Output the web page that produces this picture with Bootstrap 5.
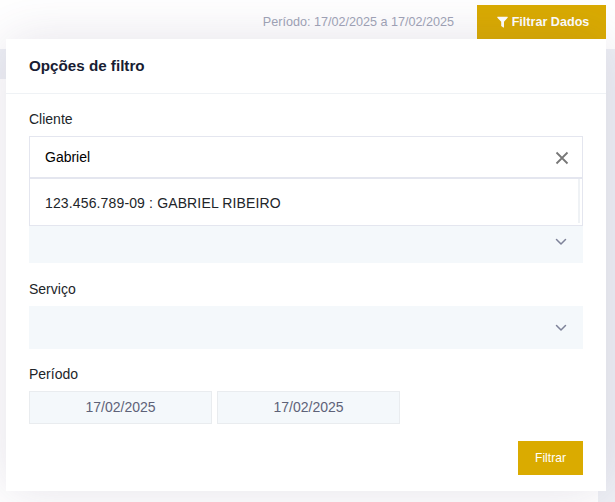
<!DOCTYPE html>
<html lang="pt-BR">
<head>
<meta charset="utf-8">
<meta name="viewport" content="width=device-width, initial-scale=1">
<title>Opções de filtro</title>
<link href="https://cdn.jsdelivr.net/npm/bootstrap@5.3.0/dist/css/bootstrap.min.css" rel="stylesheet">
<style>
body{font-family:"Liberation Sans",Arial,sans-serif;font-size:14px;line-height:21px;color:#212529;background:#eef0f5;height:502px}
.toolbar{height:49px;padding:5px 9px 0 0;background:#fff}
.period{height:34px;font-size:12.6px;color:#a1a5b7;margin-right:23px}
.btn-gold{--bs-btn-bg:#daab00;--bs-btn-color:#fff;--bs-btn-border-color:#daab00;--bs-btn-hover-bg:#c69b00;--bs-btn-hover-color:#fff;--bs-btn-border-radius:0;height:34px;padding:0}
.btn-open{width:129px;padding-left:3px;font-size:12.6px}
.page-panel{width:598px;height:423px;margin-top:30px;background:#fff}
.filter-menu{left:6px;top:39px;width:600px;height:452px;background:#fff;box-shadow:0 0 50px rgba(82,63,105,.15)}
.menu-title{height:55px;padding:0 23px 2px;font-size:15.2px;color:#181c32;border-bottom:1px solid #eff2f5}
.menu-body{padding:15px 23px 0}
.field-label{height:21px;margin-bottom:6px;display:block}
.field-label.service{margin-top:16px}
.field-label.dates{margin-top:15px}
.picker{height:43px;background:#f4f8fb;padding-right:16px}
.picker.covered{margin-top:42px}
.search{height:42px;border:1px solid #e4e6ef;background:#fff;padding:0 13px 0 15px;color:#000}
.search svg{margin-top:2px}
.results{left:0;right:0;top:42px;height:48px;border:1px solid #e4e6ef;background:#fff;padding:0 2px 2px 15px}
.result-text{letter-spacing:.14px}
.scroll-thumb{width:2px;height:44px;background:#eff2f5}
.date-box{width:183px;height:33px;border:1px solid #e9ecef;background:#f4f8fb;color:#5e6278}
.dates-row{gap:5px;margin-bottom:17px}
.btn-apply{width:65px;font-size:12.1px}
</style>
<script src="https://cdn.jsdelivr.net/npm/bootstrap@5.3.0/dist/js/bootstrap.bundle.min.js"></script>
</head>
<body class="overflow-hidden position-relative">
<header class="toolbar d-flex justify-content-end align-items-start">
  <div class="period d-flex align-items-center pb-1">
    <span class="mt-1">Período: 17/02/2025 a 17/02/2025</span>
  </div>
  <button class="btn btn-gold btn-open fw-bold d-flex align-items-center justify-content-center" type="button">
    <svg class="me-1" width="11" height="12" viewBox="0 0 11 12" fill="currentColor" aria-hidden="true"><path d="M.6.8h9.8q.7.2.2.9L7 5.8v5.5q-.3.5-.8.1L4.2 10V5.8L.4 1.7Q0 1 .6.8Z"/></svg>Filtrar Dados
  </button>
</header>
<div class="page-panel"></div>

<section class="filter-menu position-absolute">
  <div class="menu-title d-flex align-items-center fw-bold">Opções de filtro</div>
  <form class="menu-body">
    <label class="field-label">Cliente</label>
    <div class="position-relative">
      <div class="search d-flex align-items-center justify-content-between">
        <span>Gabriel</span>
        <svg width="14" height="14" viewBox="0 0 14 14" fill="none" stroke="#777" stroke-width="1.8" aria-hidden="true"><path d="m1.5 1.5 11 11m0-11-11 11"/></svg>
      </div>
      <div class="results position-absolute d-flex justify-content-between">
        <span class="result-text align-self-center pt-1">123.456.789-09 : GABRIEL RIBEIRO</span>
        <span class="scroll-thumb"></span>
      </div>
    </div>
    <div class="picker covered d-flex align-items-center justify-content-end">
      <svg width="12" height="8" viewBox="0 0 12 8" fill="none" stroke="#7e8299" stroke-width="1.5" stroke-linecap="round" stroke-linejoin="round" aria-hidden="true"><path d="m1.5 1.5 4.5 4.5 4.5-4.5"/></svg>
    </div>
    <label class="field-label service">Serviço</label>
    <div class="picker d-flex align-items-center justify-content-end">
      <svg width="12" height="8" viewBox="0 0 12 8" fill="none" stroke="#7e8299" stroke-width="1.5" stroke-linecap="round" stroke-linejoin="round" aria-hidden="true"><path d="m1.5 1.5 4.5 4.5 4.5-4.5"/></svg>
    </div>
    <label class="field-label dates">Período</label>
    <div class="dates-row d-flex">
      <div class="date-box d-flex align-items-center justify-content-center">17/02/2025</div>
      <div class="date-box d-flex align-items-center justify-content-center">17/02/2025</div>
    </div>
    <div class="d-flex justify-content-end">
      <button class="btn btn-gold btn-apply" type="button">Filtrar</button>
    </div>
  </form>
</section>
</body>
</html>
